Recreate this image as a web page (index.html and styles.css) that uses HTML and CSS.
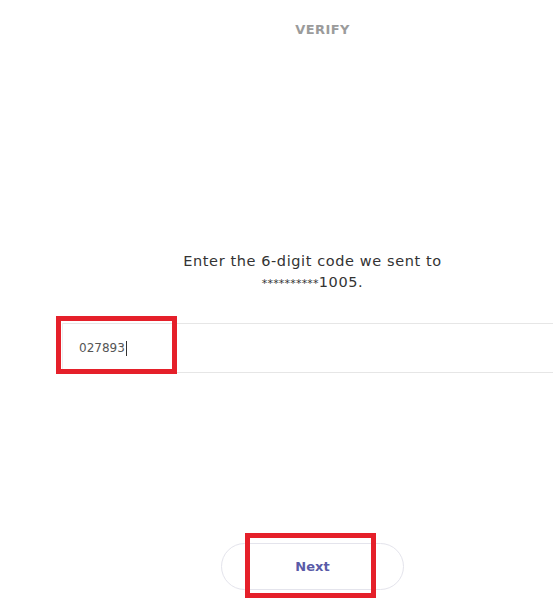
FILE: index.html
```html
<!DOCTYPE html>
<html lang="en">
<head>
    <meta charset="UTF-8">
    <meta name="viewport" content="width=device-width, initial-scale=1.0">
    <title>Verify</title>
    <link rel="stylesheet" href="styles.css">
</head>
<body>
    <div class="page">
        <div class="top-bar">
            <div class="title">VERIFY</div>
        </div>
        <div class="content">
            <p class="prompt">Enter the 6-digit code we sent to<br><span class="stars">**********</span>1005.</p>
            <div class="code-field">
                <span class="code-value">027893</span><span class="caret"></span>
                <div class="mark mark-input"></div>
            </div>
            <div class="actions">
                <button class="next-button">Next
                    <span class="mark mark-button"></span>
                </button>
            </div>
        </div>
    </div>
</body>
</html>
```

FILE: styles.css
```css
html, body {
    margin: 0;
    background: #ffffff;
    overflow: hidden;
}
body {
    font-family: "DejaVu Sans", "Open Sans", sans-serif;
    color: #333333;
    width: 553px;
    height: 600px;
}
.page {
    margin-left: 62px;
    width: 501px;
}
.top-bar {
    height: 58px;
    display: flex;
    align-items: center;
    justify-content: center;
    padding-left: 20px;
}
.title {
    font-size: 13px;
    font-weight: bold;
    color: #9b9b9b;
    letter-spacing: 0.4px;
}
.content {
    display: flex;
    flex-direction: column;
}
.prompt {
    margin: 193px 0 0;
    text-align: center;
    font-size: 14.5px;
    line-height: 21px;
    letter-spacing: 0.6px;
    color: #333333;
}
.stars {
    font-size: 11px;
    letter-spacing: 0.2px;
}
.code-field {
    position: relative;
    margin-top: 29px;
    height: 48px;
    border-top: 1px solid #e6e6e6;
    border-bottom: 1px solid #e6e6e6;
    border-left: 1px solid #eeeeee;
    display: flex;
    align-items: center;
    padding-left: 16px;
    font-size: 12px;
    color: #555555;
}
.caret {
    display: inline-block;
    width: 1px;
    height: 15px;
    background: #333333;
    margin-left: 1px;
}
.actions {
    display: flex;
    justify-content: center;
    margin-top: 170px;
}
.next-button {
    position: relative;
    width: 183px;
    height: 47px;
    border: 1px solid #e4e4ec;
    border-radius: 24px;
    background: #ffffff;
    font-family: inherit;
    font-size: 13px;
    font-weight: bold;
    color: #5a5ba8;
}
.mark {
    position: absolute;
    border: 5px solid #e5202a;
    box-sizing: border-box;
}
.mark-input {
    left: -7px;
    top: -8px;
    width: 121px;
    height: 58px;
}
.mark-button {
    left: 23px;
    top: -11px;
    width: 131px;
    height: 65px;
}
```
